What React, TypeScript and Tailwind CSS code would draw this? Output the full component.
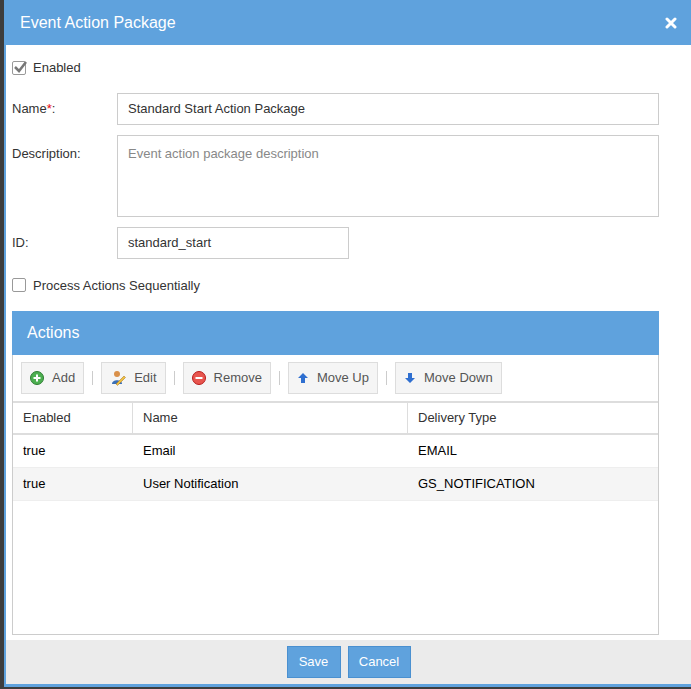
import React from "react";

const Btn = ({ icon, label }: { icon: React.ReactNode; label: string }) => (
  <div className="flex h-[32px] items-center gap-[8px] border border-[#ddd] bg-[#f5f5f5] px-[8px] text-[13px] text-[#555]">
    {icon}
    <span>{label}</span>
  </div>
);

const Sep = () => <div className="mx-[8px] h-[14px] w-px bg-[#ccc]" />;

export default function App() {
  return (
    <div className="h-[689px] w-[691px] overflow-hidden bg-[#3d3d3d] pl-[4px]" style={{ fontFamily: '"Liberation Sans", Arial, sans-serif' }}>
      <div className="flex h-[687px] flex-col border-b-[3px] border-l-[2px] border-[#5fa2dd] bg-white">
        <div className="flex h-[45px] shrink-0 items-center justify-between bg-[#5fa2dd] pl-[14px] pr-[14px] text-white">
          <span className="text-[16px]">Event Action Package</span>
          <svg width="12" height="12" viewBox="0 0 12 12"><path d="M2 2L10 10M10 2L2 10" stroke="white" strokeWidth="3" strokeLinecap="round" /></svg>
        </div>
        <div className="flex flex-1 flex-col px-[6px] text-[13px] text-[#333]">
          <div className="mt-[13px] flex items-center gap-[7px]">
            <div className="relative h-[14px] w-[14px] rounded-[2px] border border-[#999] bg-white">
              <svg className="absolute -top-[2px] left-0" width="15" height="14" viewBox="0 0 15 14"><path d="M2 7L6 11L13 2" stroke="#777" strokeWidth="2.5" fill="none" /></svg>
            </div>
            <span>Enabled</span>
          </div>
          <div className="mt-[15px] flex items-center">
            <span className="w-[105px]">Name<span className="text-red-600">*</span>:</span>
            <div className="flex h-[32px] w-[542px] items-center border border-[#ccc] px-[10px]">Standard Start Action Package</div>
          </div>
          <div className="mt-[10px] flex items-start">
            <span className="mt-[9px] w-[105px]">Description:</span>
            <div className="h-[82px] w-[542px] border border-[#ccc] px-[10px] pt-[8px] text-[#888]">Event action package description</div>
          </div>
          <div className="mt-[10px] flex items-center">
            <span className="w-[105px]">ID:</span>
            <div className="flex h-[32px] w-[232px] items-center border border-[#ccc] px-[10px]">standard_start</div>
          </div>
          <div className="mt-[17px] flex items-center gap-[7px]">
            <div className="h-[14px] w-[14px] rounded-[2px] border border-[#999] bg-white" />
            <span>Process Actions Sequentially</span>
          </div>
          <div className="mt-[16px] flex h-[324px] w-[647px] flex-col border border-[#ccc]">
            <div className="-mx-px -mt-px flex h-[44px] items-center bg-[#5fa2dd] px-[15px] text-[16px] text-white">Actions</div>
            <div className="flex h-[46px] items-center pl-[8px]">
              <Btn label="Add" icon={<svg width="14" height="14" viewBox="0 0 14 14"><circle cx="7" cy="7" r="6.5" fill="#4caf50" stroke="#2e7d32" /><path d="M7 3.5V10.5M3.5 7H10.5" stroke="white" strokeWidth="2" /></svg>} />
              <Sep />
              <Btn label="Edit" icon={<svg width="16" height="16" viewBox="0 0 16 16"><circle cx="7" cy="4" r="3" fill="#d9904a" /><path d="M2 14C2 9 12 9 12 14Z" fill="#3b6fb5" /><path d="M6 14L14 6L15.5 7.5L7.5 15.5Z" fill="#f0c040" stroke="#a07020" strokeWidth="0.5" /></svg>} />
              <Sep />
              <Btn label="Remove" icon={<svg width="14" height="14" viewBox="0 0 14 14"><circle cx="7" cy="7" r="6.5" fill="#e8554e" stroke="#b71c1c" /><path d="M3.5 7H10.5" stroke="white" strokeWidth="2" /></svg>} />
              <Sep />
              <Btn label="Move Up" icon={<svg width="12" height="12" viewBox="0 0 12 12"><path d="M6 1L11 6H8V11H4V6H1Z" fill="#2f6fd0" /></svg>} />
              <Sep />
              <Btn label="Move Down" icon={<svg width="12" height="12" viewBox="0 0 12 12"><path d="M6 11L11 6H8V1H4V6H1Z" fill="#2f6fd0" /></svg>} />
            </div>
            <div className="grid h-[34px] grid-cols-[120px_275px_1fr] border-y-2 border-t-[#ddd] border-b-[#ddd] text-[#333]">
              <div className="flex items-center border-r border-[#ddd] pl-[10px]">Enabled</div>
              <div className="flex items-center border-r border-[#ddd] pl-[10px]">Name</div>
              <div className="flex items-center pl-[10px]">Delivery Type</div>
            </div>
            <div className="grid h-[33px] grid-cols-[120px_275px_1fr] items-center border-b border-[#eee] text-black">
              <div className="pl-[10px]">true</div><div className="pl-[10px]">Email</div><div className="pl-[10px]">EMAIL</div>
            </div>
            <div className="grid h-[33px] grid-cols-[120px_275px_1fr] items-center border-b border-[#eee] bg-[#f5f5f5] text-black">
              <div className="pl-[10px]">true</div><div className="pl-[10px]">User Notification</div><div className="pl-[10px]">GS_NOTIFICATION</div>
            </div>
          </div>
        </div>
        <div className="flex h-[44px] shrink-0 items-center justify-center gap-[7px] bg-[#ebebeb] text-[13px] text-white">
          <div className="flex h-[32px] w-[54px] items-center justify-center border border-[#4a90d0] bg-[#5fa2dd]">Save</div>
          <div className="flex h-[32px] w-[63px] items-center justify-center border border-[#4a90d0] bg-[#5fa2dd]">Cancel</div>
        </div>
      </div>
    </div>
  );
}
